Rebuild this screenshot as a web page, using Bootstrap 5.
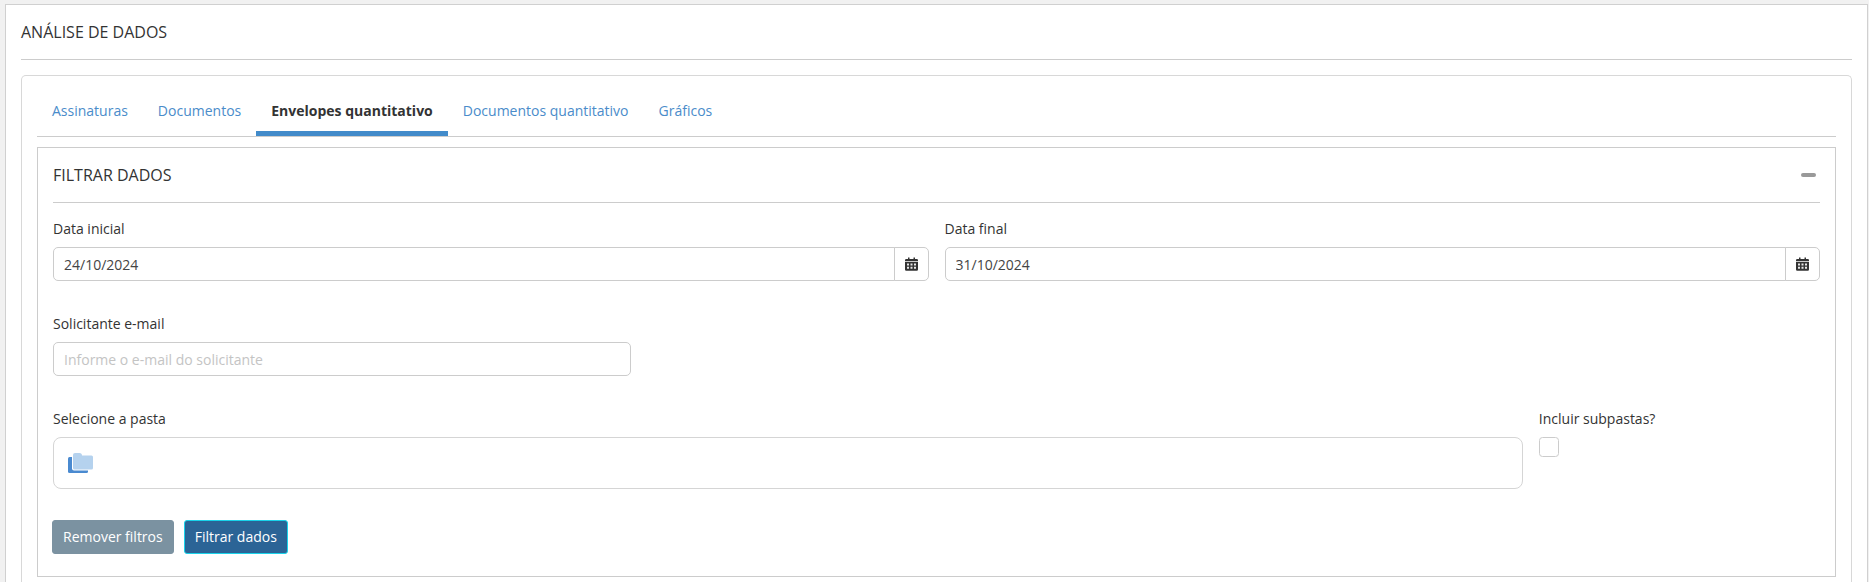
<!DOCTYPE html>
<html lang="pt-BR">
<head>
<meta charset="utf-8">
<title>Análise de dados</title>
<link href="https://cdn.jsdelivr.net/npm/bootstrap@5.3.0/dist/css/bootstrap.min.css" rel="stylesheet">
<style>
html,body{height:582px;overflow:hidden}
body{background:#f1f1f1;font-family:"Open Sans",sans-serif;font-size:14px;color:#333;padding:4px 1px 0 5px}
.shell{background:#fff;border:1px solid #d0d0d0;border-bottom:0;padding:0 15px;height:578px;overflow:hidden}
.shell-title{font-size:16px;line-height:22px;padding:16px 0 16px;margin:0;border-bottom:1px solid #ccc;font-weight:400;color:#333}
.inner-card{margin-top:15px;border:1px solid #d8d8d8;border-bottom:0;border-radius:5px 5px 0 0;padding:15px 15px 0;height:520px}
.tabbar{border-bottom:1px solid #ccc;height:46px;gap:0}
.tabbar .nav-link{color:#4a8cca;padding:8px 15px 0;height:45px;line-height:24px;border-bottom:5px solid transparent;border-radius:0;font-size:14px}
.tabbar .nav-link.active{color:#333;font-weight:700;border-bottom-color:#428bca;background:none}
.filter-panel{margin-top:10px;border:1px solid #ccc;padding:0 15px;height:430px}
.filter-head{height:55px;border-bottom:1px solid #ccc;padding-bottom:1px}
.filter-head h2{font-size:16px;font-weight:400;margin:0;color:#333;line-height:22px}
.dash{width:15px;height:4px;background:#999;border-radius:2px;margin-right:4px}
.field-label{font-size:14px;line-height:20px;margin:1px 0 8px;color:#333;display:block}
.tiny-input{height:34px;font-size:14px;border:1px solid #ccc;border-radius:5px;padding:6px 10px;color:#444;font-family:inherit}
.tiny-input::placeholder{color:#c4c4c4}
.tiny-addon{width:35px;background:#fff;border:1px solid #ccc;border-radius:0 5px 5px 0;justify-content:center;padding:0}
.folder-box{height:52px;border:1px solid #d5d5d5;border-radius:8px;padding:0 14px}
.tick{width:20px;height:20px;margin:1px 0 0;border:1px solid #ccc;border-radius:4px;display:block}
.act{font-size:14px;line-height:20px;padding:6px 10px;height:34px;border-radius:3px;color:#fff}
.act-grey{background:#7b92a1;border:1px solid #7b92a1}
.act-blue{background:#2b6496;border:1px solid #19d3ea}
.row-a{margin-top:15px}
.row-b{margin-top:32px}
.row-c{margin-top:32px}
.btn-row{margin-top:31px;margin-left:-1px;gap:10px}
</style>
</head>
<body>
<div class="shell">
  <h1 class="shell-title">ANÁLISE DE DADOS</h1>
  <div class="inner-card">
    <ul class="nav tabbar">
      <li class="nav-item"><a class="nav-link" href="#">Assinaturas</a></li>
      <li class="nav-item"><a class="nav-link" href="#">Documentos</a></li>
      <li class="nav-item"><a class="nav-link active" href="#">Envelopes quantitativo</a></li>
      <li class="nav-item"><a class="nav-link" href="#">Documentos quantitativo</a></li>
      <li class="nav-item"><a class="nav-link" href="#">Gráficos</a></li>
    </ul>
    <div class="filter-panel">
      <div class="filter-head d-flex align-items-center justify-content-between">
        <h2>FILTRAR DADOS</h2>
        <span class="dash"></span>
      </div>
      <div class="row gx-3 row-a">
        <div class="col-6">
          <label class="field-label">Data inicial</label>
          <div class="input-group">
            <input class="form-control tiny-input" value="24/10/2024">
            <span class="input-group-text tiny-addon"><svg width="13" height="14" viewBox="0 0 13 14"><path fill="#333" d="M0 5h13v7.500a1.200 1.200 0 0 1-1.200 1.200H1.200A1.200 1.200 0 0 1 0 12.500zM1.200 2H3V.5h1.500V2h4V.5H10V2h1.800A1.200 1.200 0 0 1 13 3.200V4.200H0v-1A1.200 1.200 0 0 1 1.200 2z"/><path fill="#e8e8e8" d="M2 6.500h2v2H2zM5.500 6.500h2v2h-2zM9 6.500h2v2H9zM2 9.800h2v2H2zM5.500 9.800h2v2h-2zM9 9.800h2v2H9z"/></svg></span>
          </div>
        </div>
        <div class="col-6">
          <label class="field-label">Data final</label>
          <div class="input-group">
            <input class="form-control tiny-input" value="31/10/2024">
            <span class="input-group-text tiny-addon"><svg width="13" height="14" viewBox="0 0 13 14"><path fill="#333" d="M0 5h13v7.500a1.200 1.200 0 0 1-1.200 1.200H1.200A1.200 1.200 0 0 1 0 12.500zM1.200 2H3V.5h1.500V2h4V.5H10V2h1.800A1.200 1.200 0 0 1 13 3.200V4.200H0v-1A1.200 1.200 0 0 1 1.200 2z"/><path fill="#e8e8e8" d="M2 6.500h2v2H2zM5.500 6.500h2v2h-2zM9 6.500h2v2H9zM2 9.800h2v2H2zM5.500 9.800h2v2h-2zM9 9.800h2v2H9z"/></svg></span>
          </div>
        </div>
      </div>
      <div class="row gx-3 row-b">
        <div class="col-4">
          <label class="field-label">Solicitante e-mail</label>
          <input class="form-control tiny-input" placeholder="Informe o e-mail do solicitante">
        </div>
      </div>
      <div class="row gx-3 row-c">
        <div class="col-10">
          <label class="field-label">Selecione a pasta</label>
          <div class="folder-box d-flex align-items-center">
            <svg width="26" height="21" viewBox="0 0 26 21"><rect fill="#4a8ad0" x="0" y="4" width="20" height="16" rx="1.500"/><rect fill="#fff" x="4" y="-1" width="22" height="18.500" rx="2"/><path fill="#b5d2ee" d="M7 0h4.500a2.500 2.500 0 0 1 2.500 2.500h9.500a1.500 1.500 0 0 1 1.500 1.500v11a1.500 1.500 0 0 1-1.500 1.500H6.500A1.500 1.500 0 0 1 5 15V2a2 2 0 0 1 2-2z"/></svg>
          </div>
        </div>
        <div class="col-2">
          <label class="field-label">Incluir subpastas?</label>
          <input class="form-check-input tick" type="checkbox">
        </div>
      </div>
      <div class="d-flex btn-row">
        <button class="btn act act-grey" type="button">Remover filtros</button>
        <button class="btn act act-blue" type="button">Filtrar dados</button>
      </div>
    </div>
  </div>
</div>
</body>
</html>
